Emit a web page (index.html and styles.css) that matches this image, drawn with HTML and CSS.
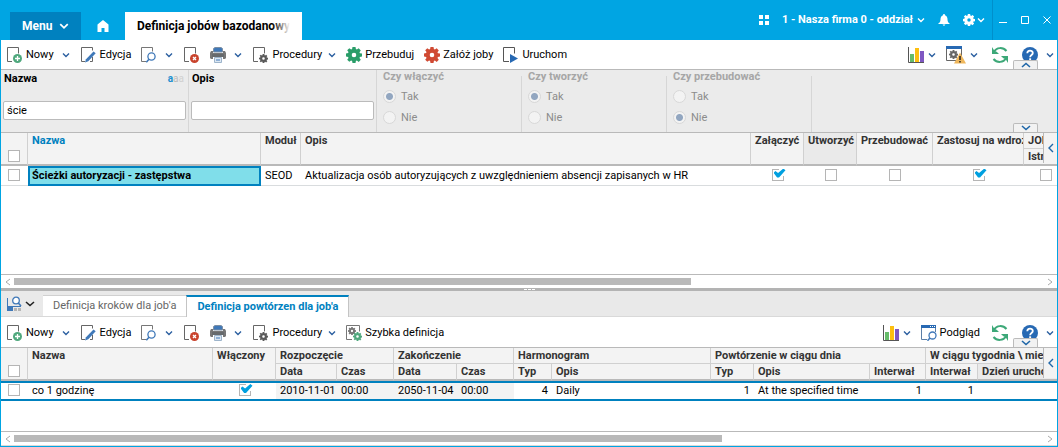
FILE: index.html
```
<!DOCTYPE html>
<html lang="pl">
<head>
  <meta charset="UTF-8">
  <meta name="viewport" content="width=device-width, initial-scale=1.0">
  <title>Definicja jobów bazodanowych</title>
  <link rel="stylesheet" href="styles.css">
</head>
<body>
  <!-- Icon set -->
  <svg class="sprite" aria-hidden="true">
    <symbol id="chevron" viewBox="0 0 8 8"><path d="M1 2.5l3 3 3-3" fill="none" stroke="currentColor" stroke-width="1.4"/></symbol>
    <symbol id="chevron-wide" viewBox="0 0 10 6"><path d="M1 1l4 3.5L9 1" fill="none" stroke="currentColor" stroke-width="1.6"/></symbol>
    <symbol id="gear" viewBox="0 0 16 16">
      <path fill="currentColor" fill-rule="evenodd" d="M6.500 0h3l.4 2.100 1 .4L12.700 1.300l2.100 2.100-1.300 1.800.4 1 2.100.4v3l-2.100.4-.4 1 1.300 1.800-2.100 2.100-1.800-1.300-1 .4L9.500 16h-3l-.4-2.100-1-.4-1.800 1.300-2.100-2.100 1.300-1.800-.4-1L0 9.500v-3l2.100-.4.4-1L1.200 3.300l2.100-2.100 1.800 1.300 1-.4zM8 5.700a2.300 2.300 0 1 0 0 4.600 2.300 2.300 0 0 0 0-4.600z"/>
    </symbol>
    <symbol id="page" viewBox="0 0 16 16"><path d="M5 14.500H.5V.5h11v6" fill="none" stroke="#666"/></symbol>
    <symbol id="new" viewBox="0 0 16 16">
      <use href="#page"/>
      <circle cx="10.500" cy="11.500" r="4.500" fill="#4fa87d"/>
      <path d="M10.500 9v5M8 11.500h5" stroke="#fff" stroke-width="1.300"/>
    </symbol>
    <symbol id="edit" viewBox="0 0 16 16">
      <path d="M4 14.500H.5V.5h11v3M11.500 10v4.500H9" fill="none" stroke="#666"/>
      <path d="M12.500 4.500l2.200 1.800-7.400 8L4 15.500l1-3.300z" fill="#3f78b8"/>
    </symbol>
    <symbol id="search" viewBox="0 0 16 16">
      <path d="M5 14.500H.5V.5h11v4" fill="none" stroke="#777"/>
      <circle cx="10.500" cy="9.500" r="3.600" fill="#fff" stroke="#3f78b8" stroke-width="1.300"/>
      <path d="M8 12.300L5.300 15.300" stroke="#3f78b8" stroke-width="1.600"/>
    </symbol>
    <symbol id="delete" viewBox="0 0 16 16">
      <use href="#page"/>
      <circle cx="10.500" cy="11.500" r="4.500" fill="#c9432d"/>
      <path d="M9 10l3 3M12 10l-3 3" stroke="#fff" stroke-width="1.300"/>
    </symbol>
    <symbol id="print" viewBox="0 0 16 16">
      <path d="M3.500 1.500L5 .5h6l1.500 1V5h-9z" fill="#3f78b8" stroke="#7d8fa3"/>
      <path d="M1 4h2v2h10V4h2l1 2v5l-1 1h-2v-2H3v2H1l-1-1V6z" fill="#777"/>
      <path d="M2 7h12v3H2z" fill="#666a6d"/>
      <path d="M4.500 10.500h7v5h-7z" fill="#dce7f2" stroke="#9db4cb"/>
      <path d="M6 13h4" stroke="#3f78b8"/>
    </symbol>
    <symbol id="proc" viewBox="0 0 16 16">
      <use href="#page"/>
      <circle cx="10.500" cy="11.500" r="4.800" fill="#fff"/>
      <use href="#gear" x="6" y="7" width="9" height="9" color="#5a5a5a"/>
    </symbol>
    <symbol id="run" viewBox="0 0 16 16">
      <path d="M6 14.500H.5V.5h11v6" fill="none" stroke="#555"/>
      <path d="M7 7l8 4.500L7 16z" fill="#2769b3"/>
    </symbol>
    <symbol id="quick" viewBox="0 0 16 16">
      <path d="M6 14.500H.5V.5h13v6" fill="none" stroke="#777"/>
      <use href="#gear" x="2" y="2" width="8" height="8" color="#777"/>
      <use href="#gear" x="7" y="7" width="9" height="9" color="#4fa87d"/>
    </symbol>
    <symbol id="chart" viewBox="0 0 16 16">
      <path d="M.5 0v15.500H16" fill="none" stroke="#555"/>
      <path d="M2 7h4v8H2z" fill="#66bb6a"/>
      <path d="M7 1h4v14H7z" fill="#fdbf10"/>
      <path d="M12 4h4v11h-4z" fill="#7e57c2"/>
    </symbol>
    <symbol id="warn" viewBox="0 0 20 18">
      <path d="M.5.5h15v14H.5z" fill="#fff" stroke="#666"/>
      <path d="M0 0h16v3H0z" fill="#2769b3"/>
      <use href="#gear" x="3" y="4" width="9" height="9" color="#666"/>
      <path d="M14 6.500l6 11H8z" fill="#efb75c"/>
      <path d="M14 10v4M14 15v1.500" stroke="#222" stroke-width="1.500"/>
    </symbol>
    <symbol id="preview" viewBox="0 0 16 16">
      <path d="M6 14.500H.5V1M14.500 1v6" fill="none" stroke="#5b7ea6"/>
      <path d="M0 0h15v3H0z" fill="#2769b3"/>
      <path d="M9 1.500h1M11 1.500h1M13 1.500h1" stroke="#fff"/>
      <circle cx="11.500" cy="10.500" r="3.500" fill="#fff" stroke="#3f78b8" stroke-width="1.300"/>
      <path d="M9 13l-2.500 2.700" stroke="#3f78b8" stroke-width="1.600"/>
    </symbol>
    <symbol id="refresh" viewBox="0 0 16 16">
      <path d="M2 5C4.500 0 11 0 14.500 4M14 11C11.500 16 5 16 1.500 12" fill="none" stroke="#3da878" stroke-width="2"/>
      <path d="M0 0v7h7L4.700 4.700 2.500 4zM16 16V9H9l2.300 2.300 2.200.7z" fill="#3da878"/>
    </symbol>
    <symbol id="help" viewBox="0 0 16 16">
      <circle cx="8" cy="8" r="8" fill="#2769b3"/>
      <path d="M5.300 6.200C5.300 2.700 10.800 2.800 10.800 6c0 2-2.700 2-2.700 4.200" fill="none" stroke="#fff" stroke-width="1.800"/>
      <path d="M7.200 11.300h1.900v1.800H7.200z" fill="#fff"/>
    </symbol>
    <symbol id="panel" viewBox="0 0 16 16">
      <path d="M.5 2v10" stroke="#3f78b8"/>
      <path d="M0 10h6v5H0z" fill="#3f78b8"/>
      <path d="M7 12h3v3H7zM11 12h3v3h-3z" fill="#b5b5b5"/>
      <path d="M4 10.500h10" stroke="#3f78b8"/>
      <circle cx="9" cy="4.500" r="3.300" fill="#fff" stroke="#3f78b8" stroke-width="1.300"/>
      <path d="M11.300 7L14 10" stroke="#3f78b8" stroke-width="1.600"/>
    </symbol>
  </svg>

  <div class="app">
    <header class="titlebar">
      <button class="menu-btn">Menu <svg class="chev-menu"><use href="#chevron"/></svg></button>
      <button class="home-btn" aria-label="Start">
        <svg viewBox="0 0 12 12"><path d="M6 0l5.500 4.500V12H7.500V8h-3v4H.5V4.500z" fill="#fff"/></svg>
      </button>
      <button class="window-tab">Definicja jobów bazodanowych</button>
      <div class="title-tools">
        <button class="grid-btn" aria-label="Moduły">
          <svg viewBox="0 0 10 10"><path d="M0 0h4v4H0zM6 0h4v4H6zM0 6h4v4H0zM6 6h4v4H6z" fill="#fff"/></svg>
        </button>
        <button class="company-btn">1 - Nasza firma 0 - oddział <svg class="chev"><use href="#chevron"/></svg></button>
        <button class="bell-btn" aria-label="Powiadomienia">
          <svg viewBox="0 0 12 12"><path d="M6 0c.8 0 1 .7 1 1.200C9 2 9.500 3.500 9.500 5.500 9.500 8 10.500 8.500 12 10H0c1.500-1.500 2.500-2 2.500-4.500C2.500 3.500 3 2 5 1.200 5 .7 5.200 0 6 0zM4.500 10.500h3L6 12z" fill="#fff"/></svg>
        </button>
        <button class="settings-btn" aria-label="Ustawienia"><svg class="gear"><use href="#gear"/></svg><svg class="chev"><use href="#chevron"/></svg></button>
      </div>
      <div class="window-tools">
        <button aria-label="Minimalizuj"><svg viewBox="0 0 8 8"><path d="M0 6.500h8" stroke="#fff"/></svg></button>
        <button aria-label="Maksymalizuj"><svg viewBox="0 0 8 8"><path d="M.5.5h7v7h-7z" stroke="#fff" fill="none"/></svg></button>
        <button aria-label="Zamknij"><svg viewBox="0 0 8 8"><path d="M.5.5l7 7M7.500.5l-7 7" stroke="#fff"/></svg></button>
      </div>
    </header>

    <div class="toolbar">
      <button><svg><use href="#new"/></svg>Nowy</button>
      <button class="drop" aria-label="Nowy - więcej"><svg><use href="#chevron"/></svg></button>
      <button><svg><use href="#edit"/></svg>Edycja</button>
      <button aria-label="Szukaj"><svg><use href="#search"/></svg></button>
      <button class="drop" aria-label="Szukaj - więcej"><svg><use href="#chevron"/></svg></button>
      <button aria-label="Usuń"><svg><use href="#delete"/></svg></button>
      <button aria-label="Drukuj"><svg><use href="#print"/></svg></button>
      <button class="drop" aria-label="Drukuj - więcej"><svg><use href="#chevron"/></svg></button>
      <button><svg><use href="#proc"/></svg>Procedury</button>
      <button class="drop tight" aria-label="Procedury - więcej"><svg><use href="#chevron"/></svg></button>
      <button class="green"><svg><use href="#gear"/></svg><span>Przebuduj</span></button>
      <button class="red"><svg><use href="#gear"/></svg><span>Załóż joby</span></button>
      <button><svg><use href="#run"/></svg>Uruchom</button>
      <div class="toolbar-right">
        <button aria-label="Wykres"><svg><use href="#chart"/></svg></button>
        <button class="drop" aria-label="Wykres - więcej"><svg><use href="#chevron"/></svg></button>
        <button aria-label="Konfiguracja"><svg class="wide"><use href="#warn"/></svg></button>
        <button class="drop" aria-label="Konfiguracja - więcej"><svg><use href="#chevron"/></svg></button>
        <button class="refresh" aria-label="Odśwież"><svg><use href="#refresh"/></svg></button>
        <button class="help" aria-label="Pomoc"><svg><use href="#help"/></svg></button>
        <button class="drop" aria-label="Pomoc - więcej"><svg><use href="#chevron"/></svg></button>
      </div>
      <button class="collapse up" aria-label="Zwiń"><svg><use href="#chevron-wide"/></svg></button>
    </div>

    <form class="filters">
      <div class="filter text-filter">
        <label for="fName">Nazwa</label>
        <span class="case-hint"><b>a</b>a<i>a</i></span>
        <input type="text" id="fName" value="ście">
      </div>
      <div class="filter text-filter">
        <label for="fDesc">Opis</label>
        <input type="text" id="fDesc">
      </div>
      <fieldset class="filter" disabled>
        <legend>Czy włączyć</legend>
        <label><input type="radio" name="enable" checked>Tak</label>
        <label><input type="radio" name="enable">Nie</label>
      </fieldset>
      <fieldset class="filter" disabled>
        <legend>Czy tworzyć</legend>
        <label><input type="radio" name="create" checked>Tak</label>
        <label><input type="radio" name="create">Nie</label>
      </fieldset>
      <fieldset class="filter" disabled>
        <legend>Czy przebudować</legend>
        <label><input type="radio" name="rebuild">Tak</label>
        <label><input type="radio" name="rebuild" checked>Nie</label>
      </fieldset>
      <button type="button" class="collapse" aria-label="Rozwiń"><svg><use href="#chevron-wide"/></svg></button>
    </form>

    <section class="grid jobs">
      <table>
        <colgroup>
          <col class="w-check"><col class="w-job"><col class="w-module"><col>
          <col class="w-flag"><col class="w-flag"><col class="w-rebuild"><col class="w-deploy"><col class="w-exists">
        </colgroup>
        <thead>
          <tr>
            <th rowspan="2" class="check"><input type="checkbox" aria-label="Zaznacz wszystko"></th>
            <th rowspan="2" class="sorted">Nazwa</th>
            <th rowspan="2">Moduł</th>
            <th rowspan="2">Opis</th>
            <th rowspan="2">Załączyć</th>
            <th rowspan="2" class="shade">Utworzyć</th>
            <th rowspan="2">Przebudować</th>
            <th rowspan="2">Zastosuj na wdrożeniu</th>
            <th>JOB</th>
          </tr>
          <tr><th>Istnieje</th></tr>
        </thead>
        <tbody>
          <tr>
            <td class="check"><input type="checkbox" aria-label="Zaznacz wiersz"></td>
            <td class="current">Ścieżki autoryzacji - zastępstwa</td>
            <td>SEOD</td>
            <td>Aktualizacja osób autoryzujących z uwzględnieniem absencji zapisanych w HR</td>
            <td class="flag"><input type="checkbox" aria-label="Załączyć" checked></td>
            <td class="flag"><input type="checkbox" aria-label="Utworzyć"></td>
            <td class="flag"><input type="checkbox" aria-label="Przebudować"></td>
            <td class="flag"><input type="checkbox" aria-label="Zastosuj na wdrożeniu" checked></td>
            <td class="flag"><input type="checkbox" aria-label="Istnieje"></td>
          </tr>
        </tbody>
      </table>
      <button class="expand" aria-label="Pokaż panel"><svg viewBox="0 0 6 10"><path d="M5 1L1 5l4 4" fill="none" stroke="#1f66a8" stroke-width="1.400"/></svg></button>
    </section>
    <div class="scrollbar">
      <svg viewBox="0 0 6 8"><path d="M5 1L1 4l4 3" fill="none" stroke="#aaa"/></svg>
      <div class="track"><div class="thumb" style="width: 65.7%"></div></div>
      <svg viewBox="0 0 6 8"><path d="M1 1l4 3-4 3" fill="none" stroke="#aaa"/></svg>
    </div>

    <div class="splitter"><i></i><i></i><i></i></div>

    <nav class="tabs">
      <button class="panel-btn" aria-label="Panele"><svg class="icon"><use href="#panel"/></svg><svg class="arrow"><use href="#chevron-wide"/></svg></button>
      <button class="tab">Definicja kroków dla job'a</button>
      <button class="tab active">Definicja powtórzen dla job'a</button>
    </nav>

    <div class="toolbar lower">
      <button><svg><use href="#new"/></svg>Nowy</button>
      <button class="drop" aria-label="Nowy - więcej"><svg><use href="#chevron"/></svg></button>
      <button><svg><use href="#edit"/></svg>Edycja</button>
      <button aria-label="Szukaj"><svg><use href="#search"/></svg></button>
      <button class="drop" aria-label="Szukaj - więcej"><svg><use href="#chevron"/></svg></button>
      <button aria-label="Usuń"><svg><use href="#delete"/></svg></button>
      <button aria-label="Drukuj"><svg><use href="#print"/></svg></button>
      <button class="drop" aria-label="Drukuj - więcej"><svg><use href="#chevron"/></svg></button>
      <button><svg><use href="#proc"/></svg>Procedury</button>
      <button class="drop tight" aria-label="Procedury - więcej"><svg><use href="#chevron"/></svg></button>
      <button><svg><use href="#quick"/></svg>Szybka definicja</button>
      <div class="toolbar-right">
        <button aria-label="Wykres"><svg><use href="#chart"/></svg></button>
        <button class="drop" aria-label="Wykres - więcej"><svg><use href="#chevron"/></svg></button>
        <button><svg><use href="#preview"/></svg>Podgląd</button>
        <button class="refresh" aria-label="Odśwież"><svg><use href="#refresh"/></svg></button>
        <button class="help" aria-label="Pomoc"><svg><use href="#help"/></svg></button>
        <button class="drop" aria-label="Pomoc - więcej"><svg><use href="#chevron"/></svg></button>
      </div>
      <button class="collapse" aria-label="Rozwiń"><svg><use href="#chevron-wide"/></svg></button>
    </div>

    <section class="grid repeats">
      <table>
        <colgroup>
          <col class="w-check"><col class="w-name"><col class="w-on">
          <col class="w-start"><col class="w-time"><col class="w-end"><col class="w-time">
          <col class="w-type"><col><col class="w-daytype"><col class="w-daydesc">
          <col class="w-interval"><col class="w-week"><col class="w-day">
        </colgroup>
        <thead>
          <tr>
            <th rowspan="2" class="check"><input type="checkbox" aria-label="Zaznacz wszystko"></th>
            <th rowspan="2">Nazwa</th>
            <th rowspan="2">Włączony</th>
            <th colspan="2">Rozpoczęcie</th>
            <th colspan="2">Zakończenie</th>
            <th colspan="2">Harmonogram</th>
            <th colspan="3">Powtórzenie w ciągu dnia</th>
            <th colspan="2">W ciągu tygodnia \ miesiąca</th>
          </tr>
          <tr>
            <th>Data</th>
            <th>Czas</th>
            <th>Data</th>
            <th>Czas</th>
            <th>Typ</th>
            <th>Opis</th>
            <th>Typ</th>
            <th>Opis</th>
            <th>Interwał</th>
            <th>Interwał</th>
            <th class="shade">Dzień uruchomienia</th>
          </tr>
        </thead>
        <tbody>
          <tr>
            <td class="check"><input type="checkbox" aria-label="Zaznacz wiersz"></td>
            <td>co 1 godzinę</td>
            <td class="flag"><input type="checkbox" aria-label="Włączony" checked></td>
            <td class="date">2010-11-01</td>
            <td class="date">00:00</td>
            <td class="date">2050-11-04</td>
            <td class="date">00:00</td>
            <td class="num">4</td>
            <td>Daily</td>
            <td class="num">1</td>
            <td>At the specified time</td>
            <td class="num">1</td>
            <td class="num">1</td>
            <td></td>
          </tr>
        </tbody>
      </table>
      <button class="expand" aria-label="Pokaż panel"><svg viewBox="0 0 6 10"><path d="M5 1L1 5l4 4" fill="none" stroke="#1f66a8" stroke-width="1.400"/></svg></button>
    </section>
    <div class="scrollbar last">
      <svg viewBox="0 0 6 8"><path d="M5 1L1 4l4 3" fill="none" stroke="#aaa"/></svg>
      <div class="track"><div class="thumb" style="width: 68.700%"></div></div>
      <svg viewBox="0 0 6 8"><path d="M1 1l4 3-4 3" fill="none" stroke="#aaa"/></svg>
    </div>
  </div>
</body>
</html>
```
FILE: styles.css
```
* {
  box-sizing: border-box;
}
body {
  margin: 0;
  font-family: Roboto, Arial, sans-serif;
  font-size: 11px;
  line-height: 14px;
  color: #000;
}
button {
  display: flex;
  align-items: center;
  margin: 0;
  padding: 0;
  border: none;
  background: none;
  font: inherit;
  color: inherit;
  white-space: nowrap;
  cursor: pointer;
}
svg {
  display: block;
  flex: none;
}
.sprite {
  position: absolute;
  width: 0;
  height: 0;
}
.app {
  display: flex;
  flex-direction: column;
  height: 100vh;
  border: 1px solid #00a5e3;
  border-top: none;
  background: #fff;
}

/* Title bar */
.titlebar {
  display: flex;
  align-items: flex-end;
  flex: none;
  height: 40px;
  padding-left: 9px;
  background: #00a5e3;
  color: #fff;
  font-weight: bold;
}
.menu-btn {
  height: 28px;
  width: 71px;
  padding-left: 12px;
  gap: 7px;
  background: #0081bf;
  font-size: 12px;
}
.chev-menu {
  width: 10px;
  height: 10px;
}
.home-btn {
  width: 44px;
  height: 28px;
  justify-content: center;
}
.home-btn svg {
  width: 12px;
  height: 12px;
}
.window-tab {
  position: relative;
  width: 177px;
  height: 28px;
  padding: 0 12px;
  overflow: hidden;
  background: #fff;
  color: #000;
  font-size: 12px;
}
.window-tab::after {
  content: "";
  position: absolute;
  top: 0;
  right: 0;
  width: 30px;
  height: 100%;
  background: linear-gradient(to right, transparent, #fff 60%);
}
.title-tools {
  display: flex;
  align-items: center;
  align-self: stretch;
  gap: 13px;
  margin-left: auto;
  padding-right: 7px;
}
.title-tools .chev {
  width: 8px;
  height: 8px;
}
.grid-btn svg {
  width: 10px;
  height: 10px;
}
.company-btn {
  gap: 4px;
}
.bell-btn svg {
  width: 12px;
  height: 12px;
}
.settings-btn {
  gap: 2px;
}
.settings-btn .gear {
  width: 12px;
  height: 12px;
}
.window-tools {
  display: flex;
  align-items: center;
  align-self: stretch;
  gap: 14px;
  padding: 0 6px;
  border-left: 1px solid #008fcb;
}
.window-tools svg {
  width: 8px;
  height: 8px;
}

/* Toolbars */
.toolbar {
  position: relative;
  display: flex;
  align-items: center;
  flex: none;
  gap: 10px;
  height: 30px;
  padding: 1px 3px 0 6px;
  border-bottom: 1px solid #b9b9b9;
}
.toolbar.lower {
  height: 31px;
}
.toolbar button {
  gap: 3px;
}
.toolbar svg {
  width: 16px;
  height: 16px;
}
.toolbar svg.wide {
  width: 20px;
  height: 18px;
}
.toolbar .drop {
  margin: 0 1px 0 -2px;
  color: #2b5fa0;
}
.toolbar .drop.tight {
  margin: 0 0 0 -4px;
}
.toolbar .drop svg {
  width: 8px;
  height: 8px;
}
.green svg {
  color: #2a9d69;
}
.red svg {
  color: #d04a33;
}
.toolbar-right {
  display: flex;
  align-items: center;
  gap: 8px;
  margin-left: auto;
}
.toolbar-right .drop {
  margin: 0 2px 0 -4px;
}
.toolbar-right .refresh {
  margin-left: 4px;
}
.toolbar-right .help {
  margin-left: 6px;
}
.toolbar-right .help + .drop {
  margin: 0;
}
.collapse {
  position: absolute;
  right: 19px;
  bottom: 0;
  justify-content: center;
  width: 25px;
  height: 9px;
  border: 1px solid #bbb;
  border-bottom: none;
  border-radius: 2px 2px 0 0;
  background: #f2f2f2;
  color: #1f66a8;
}
.toolbar .collapse svg,
.filters .collapse svg {
  width: 10px;
  height: 6px;
}
.collapse.up svg {
  transform: rotate(180deg);
}

/* Filters */
.filters {
  position: relative;
  display: flex;
  flex: none;
  height: 63px;
  border-bottom: 1px solid #b9b9b9;
  background: #ebebeb;
}
.filter {
  width: 145px;
  min-width: 0;
  margin: 0;
  padding: 4px 6px 0;
  border: none;
  border-right: 1px solid #d6d6d6;
}
.text-filter {
  display: flex;
  flex-wrap: wrap;
  justify-content: space-between;
  align-content: space-between;
  width: 188px;
  padding: 2px 2px 12px;
}
.filter > label[for],
.filter legend {
  padding: 0;
  font-weight: bold;
}
.filter > label[for] {
  padding-left: 1px;
}
.case-hint {
  padding-right: 2px;
  color: #bbb;
  font-size: 10px;
}
.case-hint b {
  color: #1b8fd0;
}
.case-hint i {
  color: #d0d0d0;
  font-style: normal;
}
.filter input[type="text"] {
  width: 100%;
  height: 19px;
  padding: 0 3px;
  border: 1px solid #bbb;
  border-radius: 2px;
  background: #fff;
  font: inherit;
}
fieldset.filter {
  color: #8c8c8c;
}
fieldset.filter legend {
  height: 12px;
  color: #a6a6a6;
}
fieldset.filter label {
  display: flex;
  align-items: center;
  gap: 5px;
  height: 21px;
}
input[type="radio"] {
  appearance: none;
  width: 13px;
  height: 13px;
  margin: 0;
  border: 1px solid #d8d8d8;
  border-radius: 50%;
  background: #f3f3f3;
}
input[type="radio"]:checked {
  background: radial-gradient(circle, #92a6c0 3px, #f3f3f3 4px);
}

/* Check boxes */
input[type="checkbox"] {
  appearance: none;
  position: relative;
  display: block;
  width: 12px;
  height: 12px;
  margin: 0;
  border: 1px solid #b5b5b5;
  background: #fff;
}
input[type="checkbox"]:checked::before,
input[type="checkbox"]:checked::after {
  content: "";
  position: absolute;
}
input[type="checkbox"]:checked::before {
  top: -1px;
  right: -1px;
  width: 5px;
  height: 7px;
  background: #fff;
}
input[type="checkbox"]:checked::after {
  top: -1px;
  left: 1px;
  width: 12px;
  height: 9px;
  background: #00a0e0;
  clip-path: polygon(0 48%, 16% 28%, 38% 50%, 82% 0, 100% 20%, 46% 100%, 30% 100%);
}

/* Grids */
.grid {
  position: relative;
  min-height: 54px;
  overflow: hidden;
}
.jobs {
  flex: 17 1 0;
}
.repeats {
  flex: 10 1 0;
}
table {
  width: calc(100% + 11px);
  table-layout: fixed;
  border-collapse: separate;
  border-spacing: 0;
}
th,
td {
  overflow: hidden;
  white-space: nowrap;
  text-align: left;
}
th {
  height: 16px;
  padding: 0 0 0 4px;
  border-right: 1px solid #d0d0d0;
  border-bottom: 1px solid #d0d0d0;
  background: #f3f3f3;
  color: #333;
  line-height: 15px;
  vertical-align: top;
}
th[rowspan],
thead tr:last-child th {
  border-bottom: 2px solid #b9b9b9;
}
th.sorted {
  color: #0081bf;
}
th.shade {
  background: #eaeaea;
}
th.check {
  padding: 0 0 2px 7px;
  vertical-align: bottom;
}
td {
  height: 20px;
  padding: 0 4px;
  border-bottom: 1px solid #d9dcde;
}
td.check {
  padding: 0 0 2px 7px;
}
td.flag {
  padding: 0 4px 2px;
}
td.flag input {
  margin: 0 auto;
}
td.current {
  padding: 0 2px;
  border: 2px solid #0081bf;
  background: #80deea;
  font-weight: bold;
}
.repeats td {
  border-top: 2px solid #0081bf;
  border-bottom: 2px solid #0081bf;
}
td.date {
  background: #f3f3f3;
}
td.num {
  text-align: right;
}
.expand {
  position: absolute;
  top: 0;
  right: 0;
  justify-content: center;
  width: 14px;
  height: 30px;
  border-left: 1px solid #b9b9b9;
  background: #f3f3f3;
}
.expand svg {
  width: 6px;
  height: 10px;
}
.w-check { width: 27px; }
.w-job { width: 233px; }
.w-module { width: 40px; }
.w-flag { width: 53px; }
.w-rebuild { width: 76px; }
.w-deploy { width: 91px; }
.w-exists { width: 44px; }
.w-name { width: 185px; }
.w-on { width: 63px; }
.w-start { width: 61px; }
.w-time { width: 57px; }
.w-end { width: 63px; }
.w-type { width: 38px; }
.w-daytype { width: 43px; }
.w-daydesc { width: 116px; }
.w-interval { width: 56px; }
.w-week { width: 52px; }
.w-day { width: 90px; }

/* Horizontal scrollbars */
.scrollbar {
  display: flex;
  align-items: center;
  flex: none;
  gap: 3px;
  height: 14px;
  padding: 0 4px;
  border-top: 1px solid #b9b9b9;
}
.scrollbar.last {
  height: 15px;
  border-bottom: 1px solid #d9d9d9;
}
.scrollbar svg {
  width: 6px;
  height: 8px;
}
.track {
  flex: 1;
}
.thumb {
  height: 7px;
  background: #b9b9b9;
}
.splitter {
  display: flex;
  justify-content: center;
  align-items: center;
  flex: none;
  gap: 1px;
  height: 3px;
  background: #b3b3b3;
}
.splitter i {
  width: 3px;
  height: 1px;
  background: #fff;
}

/* Detail tabs */
.tabs {
  display: flex;
  align-items: flex-end;
  flex: none;
  height: 26px;
  background: #e9e9e9;
  border-bottom: 1px solid #d9d9d9;
}
.panel-btn {
  width: 42px;
  height: 25px;
  padding-left: 6px;
  gap: 2px;
  color: #222;
}
.panel-btn .icon {
  width: 16px;
  height: 16px;
}
.panel-btn .arrow {
  width: 10px;
  height: 6px;
}
.tab {
  height: 21px;
  padding: 0 10px;
  border-top: 1px solid #d0d0d0;
  background: #fff;
  color: #666;
}
.tab.active {
  height: 22px;
  margin-bottom: -1px;
  border: 1px solid #c4c4c4;
  border-width: 2px 1px 0;
  border-top-color: #0081bf;
  color: #0081bf;
  font-weight: bold;
}
```
